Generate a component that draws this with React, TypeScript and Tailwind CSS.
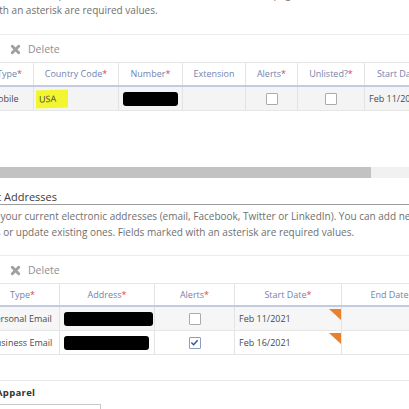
import React from "react";

const font = { fontFamily: '"Open Sans", "Liberation Sans", sans-serif' };

function Req() {
  return <span className="text-[#e0474c]">*</span>;
}

function DeleteIcon() {
  return (
    <svg width="11" height="11" viewBox="0 0 12 12" className="shrink-0">
      <path d="M2.5 2.5 L9.5 9.5 M9.5 2.5 L2.5 9.5" stroke="#a0a0a0" strokeWidth="3.2" strokeLinecap="round" />
    </svg>
  );
}

function Toolbar() {
  return (
    <div className="flex h-[28px] items-center gap-[7px] border-t border-[#ededed] pl-[10px] pt-[2px] text-[10.5px] text-[#8f8f8f]">
      <DeleteIcon />
      <span>Delete</span>
    </div>
  );
}

function Checkbox({ checked = false }: { checked?: boolean }) {
  return (
    <div
      className={`flex h-[12px] w-[12px] items-center justify-center rounded-[1px] border bg-white ${
        checked ? "border-[#8e9cc0]" : "border-[#ababab]"
      }`}
    >
      {checked && (
        <svg width="9" height="9" viewBox="0 0 10 10">
          <path d="M1.5 5 L4 7.5 L8.5 2.5" fill="none" stroke="#34549a" strokeWidth="1.6" />
        </svg>
      )}
    </div>
  );
}

function Redacted({ w }: { w: number }) {
  return <div className="h-[14px] rounded-[3px] bg-black" style={{ width: w }} />;
}

function HeadCell({ w, children }: { w: string; children: React.ReactNode }) {
  return (
    <div className={`${w} flex shrink-0 items-center justify-center whitespace-nowrap border-r border-[#e3e3e3] text-[9px] text-[#7384ad]`}>
      {children}
    </div>
  );
}

function Cell({ w, children, center = false, bg = "" }: { w: string; children?: React.ReactNode; center?: boolean; bg?: string }) {
  return (
    <div
      className={`${w} ${bg} relative flex shrink-0 items-center whitespace-nowrap border-r border-[#e3e3e3] text-[9px] text-[#4a4a4a] ${
        center ? "justify-center" : "pl-[4px]"
      }`}
    >
      {children}
    </div>
  );
}

function Corner() {
  return (
    <svg width="12" height="11" viewBox="0 0 12 11" className="absolute right-0 top-[2px]">
      <polygon points="0,0 12,0 12,11" fill="#ea7f2c" />
    </svg>
  );
}

function PhoneTable() {
  return (
    <div className="-ml-[14px] w-[560px]">
      <div className="flex h-[25px] border-y-2 border-t-[1px] border-[#e6e6e6] border-b-[#c3cbe0]">
        <HeadCell w="w-[48px]">Type<Req /></HeadCell>
        <HeadCell w="w-[85px]">Country Code<Req /></HeadCell>
        <HeadCell w="w-[64px]">Number<Req /></HeadCell>
        <HeadCell w="w-[63px]">Extension</HeadCell>
        <HeadCell w="w-[52px]">Alerts<Req /></HeadCell>
        <HeadCell w="w-[67px]">Unlisted?<Req /></HeadCell>
        <HeadCell w="w-[72px]">Start Date<Req /></HeadCell>
        <HeadCell w="w-[80px]">End Date</HeadCell>
      </div>
      <div className="flex h-[24px] border-b border-[#e6e6e6] bg-[#f4f4f4]">
        <Cell w="w-[48px]">Mobile</Cell>
        <Cell w="w-[85px]">
          <span className="-ml-[2px] flex h-[18px] items-center bg-[#f3f52e] pl-[3px] pr-[12px] -skew-y-2">USA</span>
        </Cell>
        <Cell w="w-[64px]"><Redacted w={55} /></Cell>
        <Cell w="w-[63px]" />
        <Cell w="w-[52px]" center><Checkbox /></Cell>
        <Cell w="w-[67px]" center><Checkbox /></Cell>
        <Cell w="w-[72px]">Feb 11/2021</Cell>
        <Cell w="w-[80px]" />
      </div>
    </div>
  );
}

function AddressTable() {
  const rows = [
    { type: "Personal Email", w: 89, checked: false, date: "Feb 11/2021", bg: "bg-[#f6f6f6]" },
    { type: "Business Email", w: 85, checked: true, date: "Feb 16/2021", bg: "bg-white" },
  ];
  return (
    <div className="-ml-[14px] w-[560px]">
      <div className="flex h-[24px] border-y-2 border-t-[1px] border-[#e6e6e6] border-b-[#c3cbe0]">
        <HeadCell w="w-[74px]">Type<Req /></HeadCell>
        <HeadCell w="w-[95px]">Address<Req /></HeadCell>
        <HeadCell w="w-[80px]">Alerts<Req /></HeadCell>
        <HeadCell w="w-[107px]">Start Date<Req /></HeadCell>
        <HeadCell w="w-[96px]">End Date</HeadCell>
      </div>
      {rows.map((r) => (
        <div key={r.type} className={`flex h-[24px] border-b border-[#e6e6e6] ${r.bg}`}>
          <Cell w="w-[74px]">{r.type}</Cell>
          <Cell w="w-[95px]"><Redacted w={r.w} /></Cell>
          <Cell w="w-[80px]" center><Checkbox checked={r.checked} /></Cell>
          <Cell w="w-[107px]">
            {r.date}
            <Corner />
          </Cell>
          <Cell w="w-[96px]" />
        </div>
      ))}
    </div>
  );
}

export default function App() {
  return (
    <div className="h-[409px] w-[409px] overflow-hidden bg-white" style={font}>
      <div className="-mt-[14px] flex flex-col">
        {/* phone numbers section (top cut off) */}
        <div className="whitespace-nowrap text-[10px] leading-[16px] text-[#6f6f6f]">
          <div className="-ml-[30px]">
            Enter your current phone numbers (home, business, mobile, fax, pager). You can add new ones or update existing ones. Fields marked
          </div>
          <div className="-ml-[11px]">with an asterisk are required values.</div>
        </div>

        <div className="mt-[16px]">
          <Toolbar />
          <PhoneTable />
        </div>

        {/* horizontal scrollbar */}
        <div className="mt-[56px] flex h-[11px] bg-[#f1f1f1]">
          <div className="h-full w-[371px] bg-[#c2c2c2]" />
        </div>

        {/* electronic addresses */}
        <div className="mt-[12px] whitespace-nowrap border-b border-[#9d9d9d] text-[11px] leading-[14px] text-[#3a3a3a]">
          <div className="-ml-[49px]">Electronic Addresses</div>
        </div>
        <div className="mt-[3px] whitespace-nowrap text-[10px] leading-[16px] text-[#6f6f6f]">
          <div className="-ml-[27px]">
            Enter your current electronic addresses (email, Facebook, Twitter or LinkedIn). You can add new
          </div>
          <div className="-ml-[22px]">ones or update existing ones. Fields marked with an asterisk are required values.</div>
        </div>

        <div className="mt-[15px]">
          <Toolbar />
          <AddressTable />
        </div>

        {/* apparel */}
        <div className="mt-[25px] border-t border-[#e8e8e8] pt-[5px]">
          <div className="-ml-[4px] whitespace-nowrap text-[9.5px] font-bold leading-[14px] tracking-[0.3px] text-[#333]">Apparel</div>
          <div className="-ml-[10px] mt-[4px] flex h-[20px] w-[111px] items-end border border-[#c8c8c8] bg-white pl-[10px]">
            <span className="mb-[1px] h-[4px] w-[6px] bg-[#f3f52e]" />
          </div>
        </div>
      </div>
    </div>
  );
}
